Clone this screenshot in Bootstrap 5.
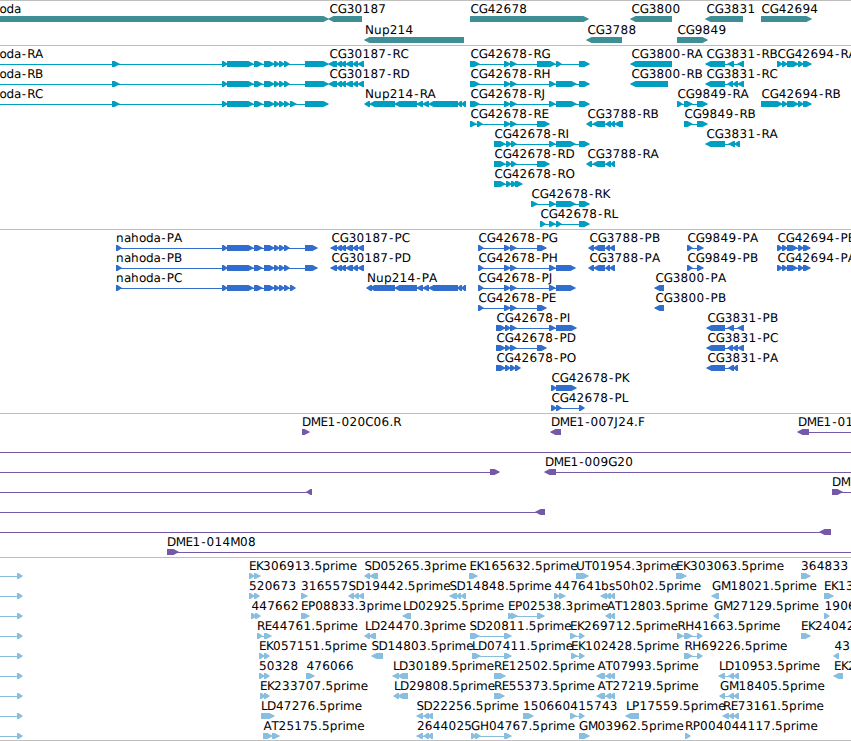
<!DOCTYPE html>
<html lang="en">
<head>
<meta charset="utf-8">
<meta name="viewport" content="width=device-width, initial-scale=1">
<title>Genome browser</title>
<link href="https://cdn.jsdelivr.net/npm/bootstrap@5.3.0/dist/css/bootstrap.min.css" rel="stylesheet">
<style>
  .browser { width: 851px; height: 741px; }
  .track { border-top: 1px solid #bebebe; padding: 2px 0 1px; }
  .track-genes { padding-bottom: 0; color: #3d8e95; }
  .track-transcripts { color: #009fc1; }
  .track-proteins { color: #316dcd; }
  .track-clones { color: #7658a9; }
  .track-ests { color: #89bedf; padding-bottom: 0; border-bottom: 1px solid #bebebe; }
  .lane { height: 20px; width: 851px; }
  .track-genes .lane { height: 21px; }
  .lane text { font: 12px "DejaVu Sans", sans-serif; fill: #000; text-rendering: geometricPrecision; }
  .lane path { fill: currentColor; }
</style>
</head>
<body class="bg-white m-0">
<main class="browser overflow-hidden d-flex flex-column">
  <section class="track track-genes" data-track="genes"></section>
  <section class="track track-transcripts" data-track="transcripts"></section>
  <section class="track track-proteins" data-track="proteins"></section>
  <section class="track track-clones" data-track="clones"></section>
  <section class="track track-ests" data-track="ests"></section>
</main>
<script src="https://cdn.jsdelivr.net/npm/bootstrap@5.3.0/dist/js/bootstrap.bundle.min.js"></script>
<script>
// Each lane is a list of features: "label|label x|strand|start-end start-end ..."
// A trailing "|from-to" extends the connecting line beyond the blocks.
const N = '222-227 227-253 254-262 264-274 274-279 279-284 284-289';
const E2 = '337-342 341-346 346-353 353-358 358-364';
const NU = '370-395 395-417 417-423 423-429 429-458 458-462 462-466';
const tracks = {
  genes: [
    ['oda|0|>|-9-328', 'CG30187|329.5|<|329-362', 'CG42678|470.5|>|470-588', 'CG3800|631.5|<|631-672', 'CG3831|706.5|<|706-743', 'CG42694|761.5|>|761-811'],
    ['Nup214|365|<|365-464', 'CG3788|587.5|<|587-622', 'CG9849|677.5|>|677-707']
  ],
  transcripts: [
    [`oda-RA|0|>|112-119 ${N} 305-328|-5-328`, `CG30187-RC|329.5|<|329-337 ${E2}`, 'CG42678-RG|470.5|>|470-479 504-510 510-516 537-555 556-561 579-589', 'CG3800-RA|631.5|<|631-672', 'CG3831-RB|706.5|<|706-725 728-734 738-744', 'CG42694-RA|777.5|>|777-782 782-787 787-798 798-803 803-811'],
    [`oda-RB|0|>|112-119 ${N} 305-328|-5-328`, `CG30187-RD|329.5|<|329-337 ${E2}`, 'CG42678-RH|470.5|>|470-479 504-510 510-516 549-555 556-576 579-589', 'CG3800-RB|631.5|<|631-668', 'CG3831-RC|706.5|<|706-725 728-733 733-738 738-744'],
    [`oda-RC|0|>|112-119 ${N} 290-296 305-328|-5-328`, `Nup214-RA|365|<|365-370 ${NU}`, 'CG42678-RJ|470.5|>|470-479 504-510 510-516 549-555 556-576 579-589', 'CG9849-RA|677.5|>|677-682 684-692 697-707', 'CG42694-RB|761.5|>|761-782 782-787 787-798 798-803 803-811'],
    ['CG42678-RE|470.5|>|470-476 477-482 504-510 510-516 537-549', 'CG3788-RB|587.5|<|587-592 593-605 606-611 611-615 615-623', 'CG9849-RB|684.5|>|684-692 697-707'],
    ['CG42678-RI|494.5|>|494-505 506-511 511-516 549-555 556-575 579-589', 'CG3831-RA|706.5|<|706-725 729-735 735-740'],
    ['CG42678-RD|494.5|>|494-505 506-511 511-516 537-549', 'CG3788-RA|587.5|<|587-592 593-605 606-611 611-615'],
    ['CG42678-RO|494.5|>|494-505 506-511 511-516 515-522'],
    ['CG42678-RK|531.5|>|531-537 549-555 556-575 579-589'],
    ['CG42678-RL|540.5|>|540-545 549-555 556-561 579-589']
  ],
  proteins: [
    [`nahoda-PA|116|>|116-121 ${N} 305-317`, `CG30187-PC|331.5|<|331-337 ${E2}`, 'CG42678-PG|478.5|>|478-483 504-510 510-516 537-546', 'CG3788-PB|589.5|<|589-594 594-605 606-610 610-615', 'CG9849-PA|687.5|>|687-692 697-703', 'CG42694-PB|777.5|>|777-782 782-787 787-797 798-803 803-810'],
    [`nahoda-PB|116|>|116-121 ${N} 305-317`, `CG30187-PD|331.5|<|331-337 ${E2}`, 'CG42678-PH|478.5|>|478-483 504-510 510-516 549-555 556-575', 'CG3788-PA|589.5|<|589-594 594-605 606-610 610-615', 'CG9849-PB|687.5|>|687-692 697-703', 'CG42694-PA|777.5|>|777-782 782-787 787-797 798-803 803-810'],
    [`nahoda-PC|116|>|116-121 ${N} 290-295`, `Nup214-PA|367|<|367-372 ${NU}`, 'CG42678-PJ|478.5|>|478-483 504-510 510-516 549-555 556-575', 'CG3800-PA|655.5|<|655-664'],
    ['CG42678-PE|478.5|>|478-483 504-510 510-516 537-546', 'CG3800-PB|655.5|<|655-664'],
    ['CG42678-PI|496.5|>|496-505 505-510 510-516 549-555 556-576', 'CG3831-PB|707.5|<|707-725 728-734 738-744'],
    ['CG42678-PD|496.5|>|496-505 505-510 510-516 537-546', 'CG3831-PC|707.5|<|707-725 728-733 733-738 738-744'],
    ['CG42678-PO|496.5|>|496-505 505-510 510-515 515-520', 'CG3831-PA|707.5|<|707-725 729-734 734-738'],
    ['CG42678-PK|551.5|>|551-556 556-576'],
    ['CG42678-PL|551.5|>|551-556 556-561 579-584']
  ],
  clones: [
    ['DME1-020C06.R|302|>|302-309', 'DME1-007J24.F|551|<|551-561', 'DME1-01|798|<|798-809|798-860'],
    ['|0|>||-5-860'],
    ['|0|>|490-499|-5-499', 'DME1-009G20|545|<|545-556|545-860'],
    ['|0|<|307-312|-5-312', 'DM|832|>|832-842|832-860'],
    ['|0|<|536-545|-5-545'],
    ['|0|<|820-831|-5-831'],
    ['DME1-014M08|167|>|167-178|167-860']
  ],
  ests: [
    ['|0|>|17-22|-5-22', 'EK306913.5prime|249|>|249-254 254-260', 'SD05265.3prime|364.5|<|365-370 370-378', 'EK165632.5prime|469.5|>|469-477', 'UT01954.3prime|576|>|576-588', 'EK303063.5prime|676|>|676-686', '364833|801|>|801-810'],
    ['|0|>|17-22|-5-22', '520673|249|>|249-254 254-259', '316557|301|>|301-307', 'SD19442.5prime|348.5|<|349-354 354-359 359-364', 'SD14848.5prime|449.5|<|450-457 457-461 461-466', '447641|554.5|>|554-559 559-565', 'bs50h02.5prime|601|<|601-607 606-611 611-615', 'GM18021.5prime|712|<|712-719', 'EK13|824|>|824-833'],
    ['|0|>|17-22|-5-22', '447662|251.5|>|251-256 255-260', 'EP08833.3prime|301|>|301-309', 'LD02925.5prime|403|<|403-411', 'EP02538.3prime|508|>|508-513 511-517 537-544', 'AT12803.5prime|607|<|606-611 610-615', 'GM27129.5prime|714|<|714-719', '1906|824.5|>|824-829'],
    ['|0|>|17-22|-5-22', 'RE44761.5prime|257|>|257-262 264-271', 'LD24470.3prime|365|<|365-370 369-376', 'SD20811.5prime|469.5|>|470-479 504-511', 'EK269712.5prime|570|>|570-576 579-584', 'RH41663.5prime|677.5|>|677-683 684-692 697-702', 'EK24042|801|>|801-810'],
    ['|0|>|17-22|-5-22', 'EK057151.5prime|259|>|259-264 264-269', 'SD14803.5prime|371.5|<|372-383', 'LD07411.5prime|472|>|472-480 504-511', 'EK102428.5prime|571|>|571-577 579-584', 'RH69226.5prime|684.5|>|684-692 697-702', '43|834.5|<|834-839'],
    ['|0|>|17-22|-5-22', '50328|259|>|259-264 264-269', '476066|306.5|>|306-314', 'LD30189.5prime|393|<|393-399 398-408', 'RE12502.5prime|494|>|494-505', 'AT07993.5prime|597.5|<|597-605 606-611 610-615', 'LD10953.5prime|719|<|719-725 729-734 734-739', 'EK2|834|<|834-843'],
    ['|0|>|17-22|-5-22', 'EK233707.5prime|260|>|260-265 264-269', 'LD29808.5prime|394|<|394-399 398-408', 'RE55373.5prime|494|>|494-504', 'AT27219.5prime|597.5|<|597-605 606-611 610-615', 'GM18405.5prime|720|<|720-725 729-734 734-739'],
    ['|0|>|17-22|-5-22', 'LD47276.5prime|261|>|261-274', 'SD22256.5prime|416.5|<|417-423 424-429 428-433', '150660415743|523|>|523-533', '|0|>|570-576 579-584', 'LP17559.5prime|626|<|626-639', 'RE73161.5prime|723|<|723-729 729-734 734-739'],
    ['|0|>|17-22|-5-22', 'AT25175.5prime|263.5|>|263-272 272-279', '2644025|417|<|417-423 424-429 428-433', 'GH04767.5prime|471|>|471-476 475-480 504-511', 'GM03962.5prime|579|>|579-589', 'RP004044117.5prime|685|>|685-690']
  ]
};
const adv = { A:8, B:8, C:8.3, D:8.8, E:7, F:7, G:9, H:9, I:4, J:4, K:7.2, L:6.2, M:9.7, N:9, O:9, P:7.3, R:7.9, S:7.2, T:7.1, U:8.8,
  a:7, b:8, d:7.5, e:7, h:8, i:3, m:11.7, n:8, o:7, p:7.8, r:5, s:6, u:8, '-':6.3, '.':3.9 };
function label(s, x) {
  if (!s) return '';
  const xs = [];
  let p = x === 0 ? -0.6 : x - 0.1;
  for (const ch of s) {
    xs.push((ch === '-' ? p + 0.9 : p).toFixed(1));
    p += adv[ch] || 7.9;
  }
  return `<text y="10" x="${xs.join(' ')}">${s}</text>`;
}
function block(a, b, dir) {
  const h = Math.min(b - a, 6);
  return dir === '>'
    ? `M${a} 13H${b - h + 1.5}L${b + 0.8} 15.7V16.3L${b - h + 1.5} 19H${a}Z`
    : `M${b} 13H${a + h - 1.5}L${a - 0.8} 15.7V16.3L${a + h - 1.5} 19H${b}Z`;
}
function span(s) {
  const m = s.match(/^(-?\d+)-(\d+)$/);
  return [Number(m[1]), Number(m[2])];
}
for (const section of document.querySelectorAll('[data-track]')) {
  section.innerHTML = tracks[section.dataset.track].map(lane => {
    let shapes = '', texts = '';
    for (const f of lane) {
      const [name, x, dir, list, line] = f.split('|');
      const blocks = list ? list.split(' ').map(span) : [];
      const [l, r] = line ? span(line) : [blocks[0][0], blocks[blocks.length - 1][1]];
      shapes += `<path d="M${l} 16H${r}V17H${l}Z"/>` + blocks.map(b => `<path d="${block(b[0], b[1], dir)}"/>`).join('');
      texts += label(name, Number(x));
    }
    return `<svg class="lane d-block">${shapes}${texts}</svg>`;
  }).join('');
}
</script>
</body>
</html>
